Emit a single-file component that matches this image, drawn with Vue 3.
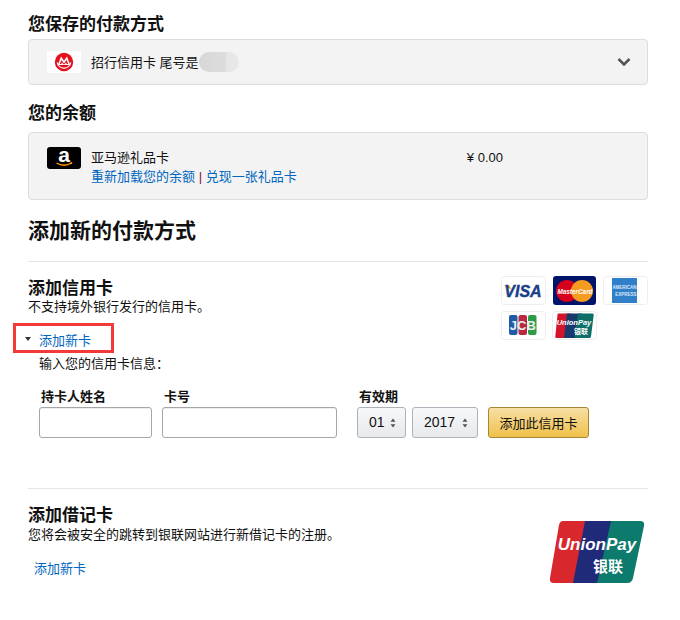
<template>
  <div class="page">
    <h3 class="saved-title">您保存的付款方式</h3>
    <div class="box saved-box">
      <svg class="bank-logo" width="34" height="22" viewBox="0 0 34 22">
        <rect width="34" height="22" fill="#fff" />
        <circle cx="17" cy="11" r="9.2" fill="#e60f1e" />
        <path d="M10.300 11.500A6.800 6.800 0 0 0 23.700 11.500" fill="none" stroke="#fff" stroke-width="1.300" />
        <path d="M10.800 14 14 5.500l3 4.200 3-4.200L23.200 14z" fill="#fff" />
        <path d="M12.800 13 14.300 9l2.700 3.600L19.700 9l1.500 4h-1.500l-.6-1.500-2.100 2.300-2.100-2.300-.6 1.500z" fill="#e60f1e" />
      </svg>
      <span class="saved-name">招行信用卡 尾号是</span>
      <span class="blur-spot"></span>
      <svg class="chevron" width="14" height="10" viewBox="0 0 14 10">
        <path d="M1.500 2 7 7.500 12.500 2" fill="none" stroke="#555" stroke-width="2.600" />
      </svg>
    </div>

    <h3 class="balance-title">您的余额</h3>
    <div class="box balance-box">
      <svg class="amazon-logo" width="34" height="22" viewBox="0 0 34 22">
        <rect width="34" height="22" rx="3" fill="#000" />
        <text x="17" y="14.500" text-anchor="middle" class="amazon-a">a</text>
        <path d="M9.500 16q7.500 4.500 15 0" fill="none" stroke="#f90" stroke-width="1.300" />
        <path d="M23 15l2.500.2-.9 2.200z" fill="#f90" />
      </svg>
      <div class="balance-text">
        <div>亚马逊礼品卡</div>
        <div><a class="link">重新加载您的余额</a> <span class="sep">|</span> <a class="link">兑现一张礼品卡</a></div>
      </div>
      <div class="amount">¥ 0.00</div>
    </div>

    <h2 class="add-title">添加新的付款方式</h2>
    <hr class="rule" />

    <div class="credit">
      <div class="credit-left">
        <h3 class="credit-title">添加信用卡</h3>
        <p class="note">不支持境外银行发行的信用卡。</p>
      </div>
      <div class="card-logos">
        <div class="card-row">
          <svg class="logo-tile" width="45" height="29" viewBox="0 0 45 29">
            <rect x=".5" y=".5" width="44" height="28" rx="3" fill="#fff" stroke="#eee" />
            <path d="M2.500 9.500h6l2 4z" fill="#e8a33a" />
            <text x="22" y="21" text-anchor="middle" class="visa">VISA</text>
          </svg>
          <svg class="logo-tile" width="43" height="29" viewBox="0 0 43 29">
            <rect width="43" height="29" rx="3" fill="#00146a" />
            <circle cx="14" cy="15" r="11" fill="#d6001c" />
            <circle cx="29" cy="15" r="11" fill="#f59b1f" />
            <text x="22" y="17.500" text-anchor="middle" textLength="35" lengthAdjust="spacingAndGlyphs" class="mc-text">MasterCard</text>
          </svg>
          <svg class="logo-tile" width="45" height="29" viewBox="0 0 45 29">
            <rect x=".5" y=".5" width="44" height="28" rx="3" fill="#fff" stroke="#eee" />
            <rect x="9" y="2" width="25" height="25" fill="#2f7fc9" />
            <text x="21.500" y="13" text-anchor="middle" class="amex-text">AMERICAN</text>
            <text x="23" y="20" text-anchor="middle" class="amex-text">EXPRESS</text>
          </svg>
        </div>
        <div class="card-row second-row">
          <svg class="logo-tile" width="45" height="29" viewBox="0 0 45 29">
            <rect x=".5" y=".5" width="44" height="28" rx="3" fill="#fff" stroke="#eee" />
            <rect x="8" y="4" width="8.500" height="20" rx="2" fill="#1f5ba8" />
            <rect x="17.500" y="4" width="8.500" height="20" rx="2" fill="#b72a3f" />
            <rect x="27" y="4" width="8.500" height="20" rx="2" fill="#2d9c48" />
            <text x="21.800" y="19" text-anchor="middle" class="jcb-text">JCB</text>
          </svg>
          <svg class="logo-tile" width="45" height="29" viewBox="0 0 45 29">
            <rect x=".5" y=".5" width="44" height="28" rx="3" fill="#fff" stroke="#eee" />
            <path d="M6.500 2.500h13L16 27H4.500q-1.500 0-1.200-1.500L5.500 3.500Q5.700 2.500 6.500 2.500z" fill="#d3142c" />
            <path d="M15 2.500h15L26.500 27H12z" fill="#173a6d" />
            <path d="M26 2.500h14.500q1.500 0 1.200 1.500L39 25.500q-.3 1.500-1.500 1.500H22.500z" fill="#0e6f6a" />
            <text x="22" y="14" text-anchor="middle" class="up-small">UnionPay</text>
            <text x="29" y="23" text-anchor="middle" class="up-small-cn">银联</text>
          </svg>
        </div>
      </div>
    </div>

    <div class="expander">
      <span class="caret"></span>
      <a class="link">添加新卡</a>
    </div>
    <p class="enter-info">输入您的信用卡信息：</p>

    <div class="form-row">
      <div class="field name-field">
        <label>持卡人姓名</label>
        <input type="text" />
      </div>
      <div class="field number-field">
        <label>卡号</label>
        <input type="text" />
      </div>
      <div class="field expiry-field">
        <label>有效期</label>
        <div class="expiry-controls">
          <div v-for="item in expiry" :key="item.value" class="select" :style="{ width: item.width + 'px' }">
            <span>{{ item.value }}</span>
            <svg width="6" height="10" viewBox="0 0 6 10">
              <path d="M3 0.500 5.500 3.800h-5zM3 9.500.5 6.200h5z" fill="#555" />
            </svg>
          </div>
          <button class="add-btn" type="button">添加此信用卡</button>
        </div>
      </div>
    </div>

    <hr class="rule debit-rule" />

    <div class="debit">
      <div class="debit-left">
        <h3 class="debit-title">添加借记卡</h3>
        <p class="note debit-note">您将会被安全的跳转到银联网站进行新借记卡的注册。</p>
        <a class="link debit-link">添加新卡</a>
      </div>
      <svg class="union-big" width="96" height="64" viewBox="0 0 96 64">
        <path d="M14 1h30L31 63H5q-5 0-4-5L10 5q1-4 4-4z" fill="#d9272e" />
        <path d="M36 1h38L62 63H24z" fill="#1f2a78" />
        <path d="M62 1h29q5 0 4 5L84 58q-1 5-6 5H48z" fill="#0d7a6e" />
        <text x="48" y="30" text-anchor="middle" class="up-big">UnionPay</text>
        <text x="59" y="52" text-anchor="middle" class="up-big-cn">银联</text>
      </svg>
    </div>
  </div>
</template>

<script setup>
const expiry = [
  { value: '01', width: 49 },
  { value: '2017', width: 66 },
]
</script>

<style>
body {
  background: #fff;
}
</style>

<style scoped>
.page {
  width: 620px;
  box-sizing: border-box;
  margin-left: 28px;
  padding-top: 15px;
  font-family: "Liberation Sans", "Noto Sans CJK SC", sans-serif;
  font-size: 13px;
  line-height: 19px;
  color: #111;
}
h2,
h3,
p {
  margin: 0;
}
h3 {
  font-size: 17px;
  line-height: 20px;
  font-weight: 700;
}
.link {
  color: #0066c0;
}
.box {
  box-sizing: border-box;
  display: flex;
  background: #f3f3f3;
  border: 1px solid #ddd;
  border-radius: 4px;
}
.saved-box {
  height: 46px;
  margin-top: 4px;
  padding-left: 18px;
  align-items: center;
}
.bank-logo {
  margin-right: 10px;
}
.saved-name {
  white-space: pre;
}
.blur-spot {
  width: 40px;
  height: 20px;
  border-radius: 10px;
  background: linear-gradient(90deg, #d6d6d6, #dadada 30%, #dcdcdc 65%, #e6e6e6 70%, #e8e8e8);
}
.chevron {
  margin-left: auto;
  margin-right: 16px;
}
.balance-title {
  margin-top: 19px;
}
.balance-box {
  height: 68px;
  margin-top: 8px;
  padding: 14px 0 0 18px;
}
.amazon-logo {
  margin-right: 10px;
}
.amazon-a {
  font-family: "Liberation Sans", sans-serif;
  font-size: 21px;
  font-weight: 700;
  fill: #fff;
}
.balance-text,
.amount {
  margin-top: 1px;
}
.sep {
  color: #8a1040;
}
.amount {
  margin-left: auto;
  margin-right: 144px;
}
.add-title {
  margin-top: 17px;
  font-size: 21px;
  line-height: 28px;
  font-weight: 700;
}
.rule {
  height: 1px;
  margin: 16px 0 0;
  border: 0;
  background: #e5e5e5;
}
.credit {
  display: flex;
  justify-content: space-between;
}
.credit-left {
  padding-top: 17px;
}
.note {
  line-height: 16px;
}
.card-logos {
  width: 147px;
  padding-top: 14px;
}
.card-row {
  display: flex;
  gap: 7px;
  margin-bottom: 6px;
}
.second-row {
  gap: 6px;
}
.logo-tile {
  display: block;
}
.visa {
  font-family: "Liberation Sans", sans-serif;
  font-size: 16px;
  font-weight: 700;
  font-style: italic;
  fill: #1a3f88;
  stroke: #1a3f88;
  stroke-width: 0.4px;
}
.mc-text {
  font-family: "Liberation Sans", sans-serif;
  font-size: 8px;
  font-weight: 700;
  font-style: italic;
  fill: #fff;
}
.amex-text {
  font-family: "Liberation Sans", sans-serif;
  font-size: 4.500px;
  font-weight: 700;
  fill: #dce9f7;
}
.jcb-text {
  font-family: "Liberation Sans", sans-serif;
  font-size: 13px;
  font-weight: 700;
  fill: #e8eef3;
}
.up-small {
  font-family: "Liberation Sans", sans-serif;
  font-size: 7.500px;
  font-weight: 700;
  font-style: italic;
  fill: #fff;
}
.up-small-cn {
  font-family: "Noto Sans CJK SC", sans-serif;
  font-size: 7px;
  font-weight: 700;
  fill: #fff;
}
.expander {
  box-sizing: border-box;
  display: flex;
  align-items: center;
  width: 101px;
  height: 30px;
  margin: -23px 0 0 -15px;
  padding-left: 9px;
  border: 3px solid #f33a3a;
}
.expander .link {
  margin-top: 4px;
}
.caret {
  width: 0;
  height: 0;
  margin: 2px 8px 0 0;
  border: 3.500px solid transparent;
  border-top: 4px solid #333;
  border-bottom: 0;
}
.enter-info {
  margin: 1px 0 0 11px;
}
.form-row {
  display: flex;
  margin: 14px 0 0 11px;
}
.field label {
  display: block;
  padding-left: 2px;
  font-weight: 700;
  line-height: 20px;
}
.field input {
  display: block;
  box-sizing: border-box;
  height: 31px;
  border: 1px solid #a6a6a6;
  border-radius: 3px;
  background: #fff;
  box-shadow: inset 0 1px 0 #eee;
}
.name-field input {
  width: 113px;
}
.number-field {
  margin-left: 10px;
}
.number-field input {
  width: 175px;
}
.expiry-field {
  margin-left: 20px;
}
.expiry-controls {
  display: flex;
  gap: 6px;
}
.select {
  box-sizing: border-box;
  display: flex;
  align-items: center;
  justify-content: space-between;
  height: 31px;
  padding: 0 9px 0 11px;
  border: 1px solid #adb1b8;
  border-radius: 3px;
  background: linear-gradient(#f7f8fa, #e7e9ec);
  color: #111;
  font-size: 14px;
}
.add-btn {
  width: 101px;
  height: 31px;
  margin-left: 4px;
  padding: 0;
  border: 1px solid #a88734;
  border-radius: 3px;
  background: linear-gradient(#f7dfa5, #f0c14b);
  color: #111;
  font-family: inherit;
  font-size: 13px;
}
.debit-rule {
  margin-top: 50px;
}
.debit {
  display: flex;
  justify-content: space-between;
}
.debit-left {
  padding-top: 17px;
}
.debit-note {
  margin-top: 1px;
}
.debit-link {
  display: block;
  margin: 16px 0 0 6px;
}
.union-big {
  margin: 31px 3px 0 0;
}
.up-big {
  font-family: "Liberation Sans", sans-serif;
  font-size: 17px;
  font-weight: 700;
  font-style: italic;
  fill: #fff;
}
.up-big-cn {
  font-family: "Noto Sans CJK SC", sans-serif;
  font-size: 15px;
  font-weight: 700;
  fill: #fff;
}
</style>
